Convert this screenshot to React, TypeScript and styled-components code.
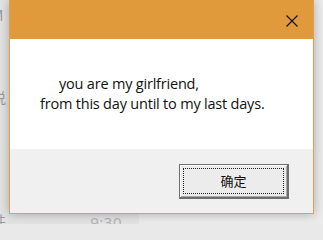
import styled, { createGlobalStyle } from 'styled-components';

const GlobalStyle = createGlobalStyle`
  html, body {
    margin: 0;
    padding: 0;
    background: #e9e9e9;
  }
  body {
    font-family: 'Noto Sans', 'Noto Sans CJK SC', sans-serif;
  }
`;

const Screen = styled.div`
  position: relative;
  width: 323px;
  height: 224px;
  overflow: hidden;
  background: #ebebeb;
`;

const ChatList = styled.div`
  width: 139px;
  height: 100%;
  background: #e3e3e3;
  display: flex;
  flex-direction: column;
`;

const ChatRow = styled.div<{ $height: number; $bottom?: boolean }>`
  height: ${(p) => p.$height}px;
  display: flex;
  align-items: ${(p) => (p.$bottom ? 'flex-end' : 'center')};
  justify-content: space-between;
  padding-right: 17px;
  color: #9a9a9a;
  font-size: 14px;
  white-space: nowrap;
`;

const ChatName = styled.span<{ $drop?: number }>`
  margin-left: -8px;
  margin-bottom: ${(p) => -(p.$drop ?? 0)}px;
  font-family: 'Noto Sans CJK SC', sans-serif;
`;

const ChatTime = styled.span`
  color: #b4b4b4;
  font-size: 15px;
  letter-spacing: 0.5px;
  margin-bottom: -8px;
`;

const Dialog = styled.div`
  position: absolute;
  left: 9px;
  top: 0;
  width: 305px;
  height: 214px;
  box-sizing: border-box;
  border: 1px solid #e2a04b;
  border-top: none;
  display: flex;
  flex-direction: column;
  box-shadow: 0 0 10px rgba(0, 0, 0, 0.28);
`;

const TitleBar = styled.div`
  height: 39px;
  background: #e09a3b;
  display: flex;
  justify-content: flex-end;
  align-items: center;
  padding-right: 15px;
`;

const CloseButton = styled.div`
  width: 12px;
  height: 12px;
  display: flex;
  margin-top: 2px;
`;

const Body = styled.div`
  height: 110px;
  background: #ffffff;
  padding-top: 35px;
  box-sizing: border-box;
`;

const Message = styled.div<{ $indent: number }>`
  padding-left: ${(p) => p.$indent}px;
  font-family: 'Open Sans', 'Noto Sans', sans-serif;
  font-size: 14.5px;
  line-height: 20px;
  color: #111111;
  letter-spacing: -0.2px;
  white-space: pre;
`;

const Footer = styled.div`
  flex: 1;
  background: #f0f0f0;
  display: flex;
  justify-content: flex-end;
  align-items: flex-start;
  padding: 15px 24px 0 0;
`;

const OkButton = styled.button`
  width: 110px;
  height: 35px;
  box-sizing: border-box;
  background: #ececec;
  border: 1px solid #6e6e6e;
  border-bottom-width: 2px;
  border-right-width: 2px;
  box-shadow: inset 1px 1px 0 #ffffff, inset -1px -1px 0 #a8a8a8;
  padding: 3px;
  display: flex;
  margin: 0;
`;

const FocusRect = styled.span`
  flex: 1;
  border: 1px dotted #222222;
  display: flex;
  align-items: center;
  justify-content: center;
  font-family: 'Noto Sans CJK SC', sans-serif;
  font-size: 13px;
  color: #111111;
  padding-bottom: 1px;
`;

function CloseIcon() {
  return (
    <svg width="12" height="12" viewBox="0 0 12 12">
      <path d="M0.5 0.5 L11.5 11.5 M11.5 0.5 L0.5 11.5" stroke="#111" strokeWidth="1.1" fill="none" />
    </svg>
  );
}

export default function App() {
  return (
    <Screen>
      <GlobalStyle />
      <ChatList>
        <ChatRow $height={30}>
          <ChatName>M</ChatName>
        </ChatRow>
        <ChatRow $height={133}>
          <ChatName>说</ChatName>
        </ChatRow>
        <ChatRow $height={61} $bottom>
          <ChatName $drop={6}>件</ChatName>
          <ChatTime>9:30</ChatTime>
        </ChatRow>
      </ChatList>
      <Dialog>
        <TitleBar>
          <CloseButton>
            <CloseIcon />
          </CloseButton>
        </TitleBar>
        <Body>
          <Message $indent={49}>you are my girlfriend,</Message>
          <Message $indent={30}>from this day until to my last days.</Message>
        </Body>
        <Footer>
          <OkButton>
            <FocusRect>确定</FocusRect>
          </OkButton>
        </Footer>
      </Dialog>
    </Screen>
  );
}
